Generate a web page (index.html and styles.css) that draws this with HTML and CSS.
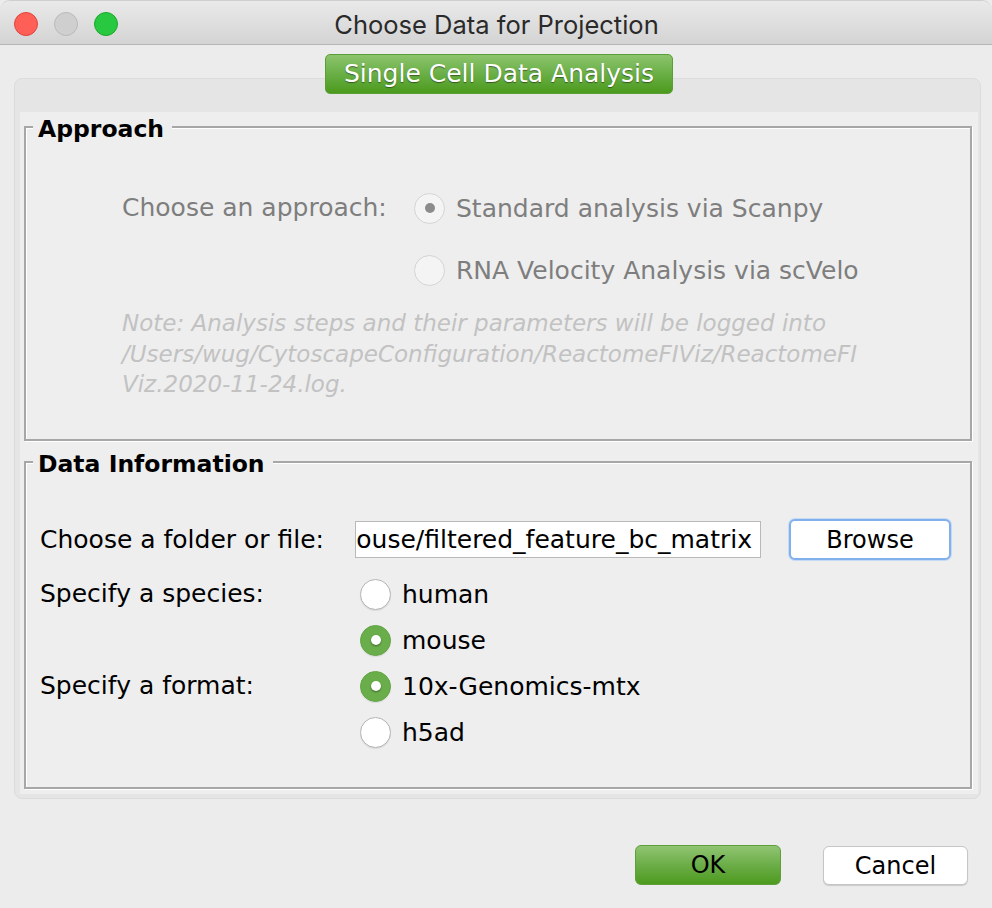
FILE: index.html
```html
<!DOCTYPE html>
<html lang="en">
<head>
<meta charset="utf-8">
<title>Choose Data for Projection</title>
<link rel="stylesheet" href="styles.css">
</head>
<body>
<div class="window">
  <header class="titlebar">
    <div class="lights">
      <span class="light red"></span>
      <span class="light gray"></span>
      <span class="light green"></span>
    </div>
    <div class="title">Choose Data for Projection</div>
  </header>

  <main class="content">
    <div class="tabrow">
      <div class="tab">Single Cell Data Analysis</div>
    </div>
    <section class="panel">
      <div class="panel-inner">
        <fieldset class="group approach">
          <legend>Approach</legend>
          <div class="approach-body">
            <div class="approach-grid">
              <div class="alabel">Choose an approach:</div>
              <div class="options">
                <div class="opt"><span class="radio disabled checked"></span><span>Standard analysis via Scanpy</span></div>
                <div class="opt"><span class="radio disabled"></span><span>RNA Velocity Analysis via scVelo</span></div>
              </div>
            </div>
            <div class="note">
              <div>Note: Analysis steps and their parameters will be logged into</div>
              <div>/Users/wug/CytoscapeConfiguration/ReactomeFIViz/ReactomeFI</div>
              <div>Viz.2020-11-24.log.</div>
            </div>
          </div>
        </fieldset>

        <fieldset class="group datainfo">
          <legend>Data Information</legend>
          <div class="data-grid">
            <div class="dlabel first">Choose a folder or file:</div>
            <div class="filerow first">
              <div class="field"><span>ouse/filtered_feature_bc_matrix</span></div>
              <button class="btn browse">Browse</button>
            </div>
            <div class="dlabel top">Specify a species:</div>
            <div class="radios">
              <div class="opt dopt"><span class="radio"></span><span>human</span></div>
              <div class="opt dopt"><span class="radio green"></span><span>mouse</span></div>
            </div>
            <div class="dlabel top">Specify a format:</div>
            <div class="radios">
              <div class="opt dopt"><span class="radio green"></span><span>10x-Genomics-mtx</span></div>
              <div class="opt dopt"><span class="radio"></span><span>h5ad</span></div>
            </div>
          </div>
        </fieldset>
      </div>
    </section>

    <div class="actions">
      <button class="btn ok">OK</button>
      <button class="btn cancel">Cancel</button>
    </div>
  </main>
</div>
</body>
</html>
```

FILE: styles.css
```css
* { box-sizing: border-box; }

html, body {
  margin: 0;
  padding: 0;
  width: 992px;
  height: 908px;
  background: #ececec;
  overflow: hidden;
  font-family: "DejaVu Sans", sans-serif;
}

.window {
  width: 992px;
  height: 908px;
  background: #ececec;
  border-radius: 10px 10px 0 0;
  border-top: 1px solid #cfcfcf;
  overflow: hidden;
}

.titlebar {
  height: 44px;
  background: linear-gradient(#e9e9e9, #d4d4d4);
  border-bottom: 1px solid #b6b6b6;
  display: flex;
  align-items: center;
}

.lights {
  display: flex;
  gap: 16px;
  padding-left: 14px;
  margin-top: 3px;
}

.light {
  width: 24px;
  height: 24px;
  border-radius: 50%;
  display: block;
}
.light.red { background: #fe5f57; border: 1px solid #e1453d; }
.light.gray { background: #cfcfcf; border: 1px solid #bababa; }
.light.green { background: #28c840; border: 1px solid #1aa92b; }

.title {
  flex: 1;
  text-align: center;
  margin-left: -117px;
  font-family: "Inter", "Liberation Sans", sans-serif;
  font-size: 25.5px;
  color: #2a2a2a;
  margin-top: 4px;
}

.content {
  padding: 9px 11px 0 14px;
}

.tabrow {
  display: flex;
  justify-content: center;
  position: relative;
  z-index: 2;
  padding-left: 3px;
}

.tab {
  width: 348px;
  height: 40px;
  border-radius: 5px;
  background: linear-gradient(#8cc46d, #6aaf46 50%, #4b9a1d);
  border: 1px solid #5a9e36;
  color: #fff;
  font-size: 25px;
  display: flex;
  align-items: center;
  justify-content: center;
  text-shadow: 0 1px 1px rgba(0,0,0,0.45);
  padding-bottom: 1px;
}

.panel {
  margin-top: -16px;
  background: #e5e5e5;
  border: 1px solid #dcdcdc;
  border-radius: 8px;
  padding: 33px 2px 5px 5px;
  height: 721px;
}

.panel-inner {
  background: #eeeeee;
  padding: 0 6px 5px 4px;
}

.group {
  margin: 0;
  padding: 0;
  border: 2px solid #a7a7a7;
  box-shadow: inset 1px 1px 0 #ffffff, 1px 1px 0 #ffffff;
  min-width: 0;
}

.group legend {
  margin-left: 7px;
  padding: 4px 8px 0 5px;
  font-weight: bold;
  font-size: 23.5px;
  line-height: 26px;
  color: #000;
  background: #eeeeee;
}

.approach {
  height: 329px;
}

.approach-body {
  padding: 46px 0 0 96px;
}

.approach-grid {
  display: grid;
  grid-template-columns: 292px auto;
  align-items: start;
}

.alabel {
  font-size: 25px;
  color: #7e7e7e;
  line-height: 40px;
}

.options {
  display: flex;
  flex-direction: column;
  gap: 22px;
}

.opt {
  display: flex;
  align-items: center;
  gap: 11px;
  height: 40px;
  font-size: 25px;
  color: #7e7e7e;
}

.note {
  margin-top: 18px;
  font-family: "DejaVu Sans", sans-serif;
  font-style: italic;
  font-size: 23px;
  line-height: 30.5px;
  color: #c2c2c2;
  white-space: nowrap;
}

.radio {
  width: 31px;
  height: 31px;
  border-radius: 50%;
  flex: none;
  background: #fff;
  border: 1px solid #b4b4b4;
  box-shadow: 0 1px 1px rgba(0,0,0,0.08);
  position: relative;
}

.radio.disabled {
  background: #f4f4f4;
  border-color: #d4d4d4;
  box-shadow: none;
}

.radio.disabled.checked::after {
  content: "";
  position: absolute;
  left: 50%;
  top: 50%;
  width: 10px;
  height: 10px;
  margin: -5px 0 0 -5px;
  border-radius: 50%;
  background: #8c8c8c;
}

.radio.green {
  background: #6aae4b;
  border-color: #62a543;
}

.radio.green::after {
  content: "";
  position: absolute;
  left: 50%;
  top: 50%;
  width: 10px;
  height: 10px;
  margin: -5px 0 0 -5px;
  border-radius: 50%;
  background: #fff;
  box-shadow: 0 1px 2px rgba(0,0,0,0.45);
}

.datainfo {
  margin-top: 6px;
}

.data-grid {
  display: grid;
  grid-template-columns: 315px auto;
  padding: 42px 0 32px 14px;
  align-items: center;
}

.first {
  margin-bottom: 11px;
}

.dlabel {
  font-size: 25px;
  color: #000;
  line-height: 41px;
}

.dlabel.top {
  align-self: start;
  line-height: 46px;
}

.filerow {
  display: flex;
  align-items: center;
  gap: 28px;
}

.field {
  width: 406px;
  height: 37px;
  background: #fff;
  border: 1px solid #b9b9b9;
  overflow: hidden;
  display: flex;
  justify-content: flex-end;
  align-items: center;
  padding-right: 8px;
  white-space: nowrap;
  font-size: 25px;
  color: #000;
}

.field span { flex: none; }

.btn {
  font-family: "DejaVu Sans", sans-serif;
  font-size: 24px;
  color: #000;
  border-radius: 6px;
  padding: 0;
  cursor: default;
}

.browse {
  width: 162px;
  height: 41px;
  background: #fff;
  border: 2px solid #82b0ea;
  box-shadow: 0 0 0 1px #c4daf5;
}

.radios {
  display: flex;
  flex-direction: column;
  padding-left: 5px;
}

.dopt {
  height: 46px;
  color: #000;
}

.actions {
  display: flex;
  justify-content: flex-end;
  gap: 42px;
  padding: 46px 13px 0 0;
}

.ok {
  width: 146px;
  height: 40px;
  background: linear-gradient(#90c572, #6cad48 50%, #4d9b1f);
  border: 1px solid #5e9f3c;
}

.cancel {
  width: 145px;
  height: 39px;
  margin-top: 1px;
  background: #fff;
  border: 1px solid #c6c6c6;
  box-shadow: 0 1px 1px rgba(0,0,0,0.15);
}
```
